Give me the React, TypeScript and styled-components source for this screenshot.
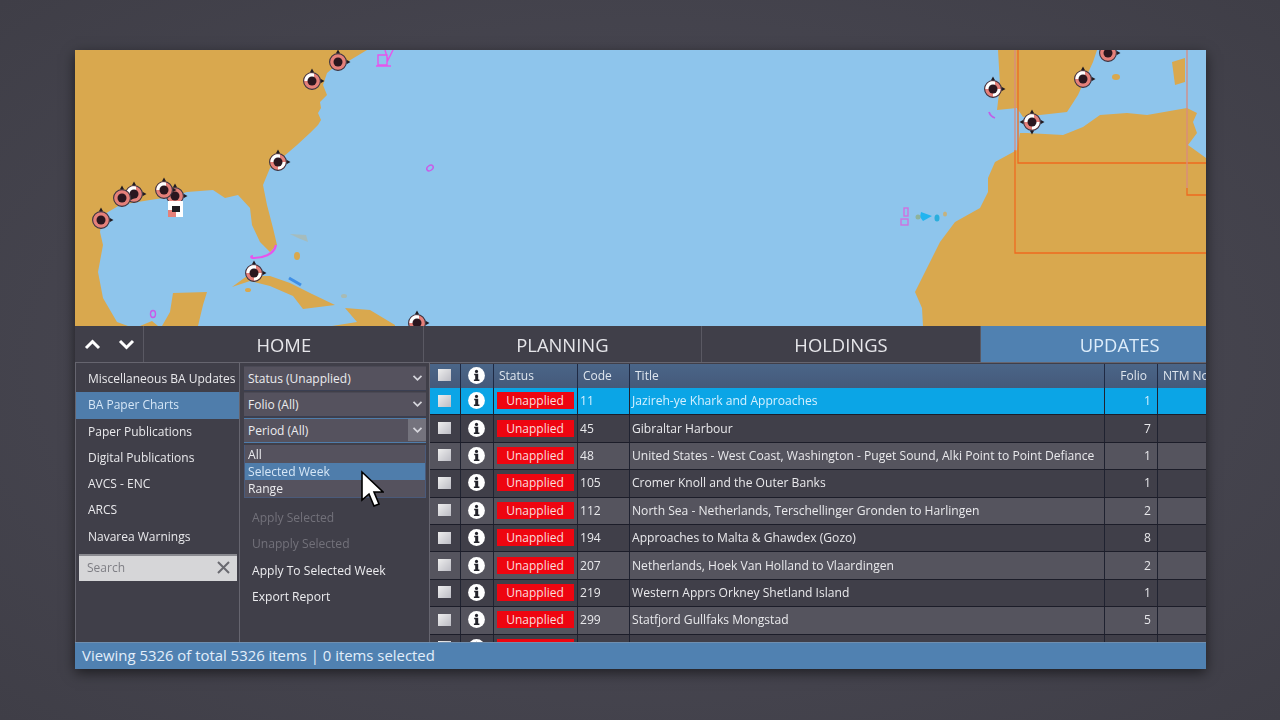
import React from "react";
import styled, { createGlobalStyle } from "styled-components";

const Global = createGlobalStyle`
  html, body { margin: 0; padding: 0; background: #45444e; }
  body { font-family: "Open Sans", "Noto Sans", sans-serif; }
`;

const Page = styled.div`
  position: relative;
  width: 1280px;
  height: 720px;
  padding: 50px 74px 0 75px;
  box-sizing: border-box;
  background: radial-gradient(ellipse at 50% 50%, #4a4953 0%, #45444e 60%, #3f3e47 100%);
  overflow: hidden;
`;

const Window = styled.div`
  width: 1131px;
  height: 619px;
  display: flex;
  flex-direction: column;
  background: #403f49;
  overflow: hidden;
  box-shadow: 0 4px 12px rgba(0, 0, 0, 0.55);
  filter: blur(0.45px);
`;

const MapSvg = styled.svg`
  display: block;
  flex: none;
  width: 1131px;
  height: 276px;
  background: #8ec5ec;
`;

const TabBar = styled.div`
  flex: none;
  height: 36px;
  display: flex;
  background: #403f49;
`;

const ArrowCell = styled.div`
  flex: none;
  width: 69px;
  margin-right: 1px;
  box-sizing: border-box;
  display: flex;
  align-items: center;
  justify-content: center;
  gap: 17px;
  border-right: 1px solid #5a5963;
  color: #fff;
`;

const Tab = styled.div<{ $active?: boolean }>`
  flex: none;
  width: 278.6px;
  box-sizing: border-box;
  display: flex;
  align-items: center;
  justify-content: center;
  font-size: 18.4px;
  padding-top: 1px;
  color: ${(p) => (p.$active ? "#dcecfa" : "#e6e6ea")};
  background: ${(p) => (p.$active ? "#5081b1" : "transparent")};
  border-right: 1px solid #5a5963;
`;

const Body = styled.div`
  flex: 1;
  min-height: 0;
  display: flex;
  border-top: 1px solid #66656f;
  border-left: 1px solid #66656f;
`;

const Sidebar = styled.div`
  flex: none;
  width: 164px;
  box-sizing: border-box;
  border-right: 1px solid #66656f;
  padding-top: 3px;
  display: flex;
  flex-direction: column;
`;

const SideItem = styled.div<{ $selected?: boolean }>`
  height: 26.3px;
  line-height: 26.3px;
  padding-left: 12px;
  font-size: 12px;
  white-space: nowrap;
  color: ${(p) => (p.$selected ? "#d5e6f6" : "#e9e9ec")};
  background: ${(p) => (p.$selected ? "#4f7dab" : "transparent")};
`;

const SearchBox = styled.div`
  margin: 4px 2px 0 3px;
  height: 27px;
  padding: 0 7px 2px 8px;
  display: flex;
  align-items: center;
  justify-content: space-between;
  background: #d6d6d8;
  border-top: 2px solid #8a8a90;
  box-sizing: border-box;
  font-size: 12px;
  color: #7e7e84;
`;

const Filters = styled.div`
  flex: none;
  width: 190px;
  box-sizing: border-box;
  border-right: 1px solid #66656f;
  padding: 3px 3px 0 4px;
  display: flex;
  flex-direction: column;
`;

const Select = styled.div<{ $open?: boolean }>`
  height: 25px;
  margin-bottom: 1px;
  box-sizing: border-box;
  display: flex;
  align-items: center;
  justify-content: space-between;
  padding-left: 4px;
  padding-bottom: 1px;
  font-size: 12px;
  color: #ececef;
  background: #55525e;
  border-bottom: 1px solid ${(p) => (p.$open ? "#4f7dab" : "#3a3f52")};
  border-top: 1px solid ${(p) => (p.$open ? "#4f7dab" : "#4a4955")};
`;

const Chevron = styled.span<{ $open?: boolean }>`
  align-self: stretch;
  width: 18px;
  display: flex;
  align-items: center;
  justify-content: center;
  background: ${(p) => (p.$open ? "#74737d" : "transparent")};
`;

const OptionList = styled.div`
  margin-top: 1px;
  height: 53px;
  box-sizing: border-box;
  padding-top: 1px;
  background: #55525e;
  border: 1px solid #4a5a7a;
  border-top: none;
`;

const Option = styled.div<{ $hover?: boolean }>`
  height: 17px;
  line-height: 17px;
  padding-left: 3px;
  font-size: 12.1px;
  color: ${(p) => (p.$hover ? "#d5e6f6" : "#ececef")};
  background: ${(p) => (p.$hover ? "#4f7dab" : "transparent")};
`;

const Actions = styled.div`
  margin-top: 7px;
  display: flex;
  flex-direction: column;
`;

const ActionItem = styled.div<{ $disabled?: boolean }>`
  height: 26.3px;
  line-height: 26.3px;
  padding-left: 8px;
  font-size: 12.1px;
  color: ${(p) => (p.$disabled ? "#72717a" : "#ececef")};
`;

const GridPane = styled.div`
  flex: 1;
  min-width: 0;
  overflow: hidden;
  padding-top: 1px;
`;

const COLUMNS = "31px 33px 84px 52px 475px 53px 60px";

const HeaderRow = styled.div`
  display: grid;
  grid-template-columns: ${COLUMNS};
  width: 788px;
  height: 24px;
  background: linear-gradient(#4a6588, #45597a);
  font-size: 12px;
  color: #dfe6ee;
`;

const HeadCell = styled.div<{ $align?: "center" | "right" }>`
  display: flex;
  align-items: center;
  justify-content: ${(p) =>
    p.$align === "center" ? "center" : p.$align === "right" ? "flex-end" : "flex-start"};
  padding: 0 ${(p) => (p.$align === "right" ? 10 : p.$align === "center" ? 1 : 0)}px 2px ${(p) => (p.$align ? 0 : 5)}px;
  white-space: nowrap;
  overflow: hidden;
  border-right: 1px solid #1f2a44;
  box-sizing: border-box;
`;

const Row = styled.div<{ $tone: "sel" | "dark" | "light" }>`
  display: grid;
  grid-template-columns: ${COLUMNS};
  width: 788px;
  height: 27.4px;
  box-sizing: border-box;
  border-bottom: 1px solid #1c1d29;
  font-size: 12.1px;
  color: ${(p) => (p.$tone === "sel" ? "#d4f0ff" : "#e9e9ec")};
  background: ${(p) =>
    p.$tone === "sel" ? "#0ba5e6" : p.$tone === "dark" ? "#403f49" : "#55545e"};
`;

const Cell = styled.div<{ $align?: "center" | "right" }>`
  display: flex;
  align-items: center;
  justify-content: ${(p) =>
    p.$align === "center" ? "center" : p.$align === "right" ? "flex-end" : "flex-start"};
  padding: 0 ${(p) => (p.$align === "right" ? 6 : p.$align === "center" ? 1 : 0)}px 1px ${(p) => (p.$align ? 0 : 2)}px;
  white-space: nowrap;
  overflow: hidden;
  border-right: 1px solid #1f2230;
  box-sizing: border-box;
`;

const CheckBox = styled.span`
  display: block;
  width: 13px;
  height: 12px;
  background: linear-gradient(135deg, #eeeeee, #bcbcc4);
  box-sizing: border-box;
`;

const Badge = styled.span`
  display: block;
  width: 77px;
  height: 17px;
  line-height: 17px;
  text-align: center;
  background: #ee0510;
  color: #f9dede;
  font-size: 12px;
`;

const StatusBar = styled.div`
  flex: none;
  height: 27px;
  line-height: 25px;
  padding-left: 7px;
  font-size: 14.9px;
  color: #e2eefa;
  background: #5081b1;
  border-top: 1px solid #6f8fb0;
  box-sizing: border-box;
`;

const Cursor = styled.svg`
  position: absolute;
  left: 360px;
  top: 470px;
  width: 24px;
  height: 40px;
`;

const Info = () => (
  <svg width="17" height="17" viewBox="0 0 17 17">
    <circle cx="8.5" cy="8.5" r="8.4" fill="#fff" />
    <circle cx="8.5" cy="4.4" r="1.6" fill="#23232b" />
    <path d="M6.2 6.8h4v5.7h1.2v1.4H5.9v-1.4h1.3V8.2h-1z" fill="#23232b" />
  </svg>
);

const Check = () => (
  <svg width="11" height="8" viewBox="0 0 11 8" fill="none">
    <path d="M1.5 1.8 5.5 5.8 9.5 1.8" stroke="#d6d6dc" strokeWidth="1.7" />
  </svg>
);

const Arrow = ({ up }: { up?: boolean }) => (
  <svg width="17" height="11" viewBox="0 0 17 11" fill="none">
    <path d={up ? "M2 9 8.5 2.5 15 9" : "M2 2 8.5 8.5 15 2"} stroke="#fff" strokeWidth="3" />
  </svg>
);

const Marker = ({ x, y, kind, four }: { x: number; y: number; kind?: "half" | "two"; four?: boolean }) => (
  <g transform={`translate(${x} ${y})`}>
    <path d="M-2.2-8.5 0-12.5 2.2-8.5ZM8.5-2.2 12.5 0 8.5 2.2Z" fill="#221c22" />
    {four && <path d="M-2.2 8.5 0 12.5 2.2 8.5ZM-8.5-2.2-12.5 0-8.5 2.2Z" fill="#221c22" />}
    <circle r="8.4" fill="#e5807a" stroke="#3a3340" strokeWidth="1.1" />
    {kind && (
      <path
        d={
          kind === "half"
            ? "M2 0V-7.6A7.6 7.6 0 0 0-7.6 0Z"
            : "M2 0V-7.6A7.6 7.6 0 0 0-7.6 0ZM0 0V7.6A7.6 7.6 0 0 0 7.6 0Z"
        }
        fill="#fff"
      />
    )}
    <circle r="4.5" fill="#2a161f" />
  </g>
);

const WorldMap = () => (
  <MapSvg viewBox="75 50 1131 276">
    <g fill="#d9a84e">
      <path d="M75 50H367L347 62 333 68 327 73 323 85 327 95 320 102 321 108 318 113 321 120 318 125 310 133 297 145 283 157 270 168 263 185 267 205 273 228 277 245 270 252 260 242 252 225 250 208 238 195 225 198 213 190 187 192 170 197 150 200 120 205 103 215 100 232 103 245 98 272 103 298 117 322 128 326H75Z" />
      <path d="M173 293 207 292 203 305 198 326H162L170 312Z" />
      <path d="M140 326 152 321 158 326Z" />
      <path d="M232 287 247 276 270 276 290 283 310 293 335 305 303 309 293 296 270 286 250 281Z" />
      <path d="M345 308 370 310 395 325V326H332L357 322Z" />
      <ellipse cx="248" cy="290" rx="3" ry="2" />
      <ellipse cx="297" cy="256" rx="3" ry="4" />
      <ellipse cx="344" cy="296" rx="3" ry="2" opacity=".35" />
      <path d="M290 234 306 235 308 242 298 238Z" opacity=".3" />
      <path d="M998 50H1097L1093 62 1078 95 1067 112 1040 115 1023 117 1017 108 997 110 1000 85Z" />
      <path d="M1020 133 1027 133 1063 135 1083 127 1100 115 1127 113 1147 115 1187 108 1197 113 1193 122 1197 133 1188 145 1206 158V326H923L922 308 915 292 927 268 940 242 955 222 980 208 988 192 988 178 995 162 1017 150Z" />
      <ellipse cx="1116" cy="77" rx="4" ry="3" />
      <path d="M1172 62 1185 58V82L1175 85Z" />
    </g>
    <g fill="none" strokeWidth="1.3">
      <path d="M1015 50V150" stroke="#d98a80" />
      <path d="M1015 150V253H1206" stroke="#ee6a1f" />
      <path d="M1018 50V163H1206" stroke="#ee6a1f" />
      <path d="M1187 50V188" stroke="#d98a80" />
      <path d="M1187 188V195H1206" stroke="#ee6a1f" />
    </g>
    <g fill="none" stroke="#e655ec" strokeWidth="1.4">
      <path d="M376 66H391M378 55H387V65H378ZM385 50 388 60 393 50" />
      <ellipse cx="430" cy="168" rx="3.5" ry="2.5" transform="rotate(-35 430 168)" stroke="#c95ce8" />
      <ellipse cx="153" cy="314" rx="2.5" ry="3.5" stroke="#c95ce8" />
      <path d="M276 245C274 255 262 258 254 258 250 258 251 256 253 256" strokeWidth="2.2" />
      <path d="M989 112C990 115 992 117 995 118" stroke="#c060e8" strokeWidth="1.8" />
      <rect x="904" y="208" width="4" height="8" stroke="#d070e0" />
      <rect x="901" y="219" width="7" height="6" stroke="#d070e0" />
    </g>
    <path d="M289 278 301 285" stroke="#3f8fe6" strokeWidth="3" />
    <path d="M921 212 932 216 923 221 920 217Z" fill="#21b4f0" />
    <ellipse cx="937" cy="218" rx="2.5" ry="3.5" fill="#2aaedd" />
    <ellipse cx="945" cy="214" rx="2" ry="2.5" fill="#c5b27f" />
    <ellipse cx="918" cy="217" rx="2.5" ry="2.5" fill="#8eb39b" />
    <Marker x={338} y={62} />
    <Marker x={312} y={81} kind="half" />
    <Marker x={278} y={162} kind="two" />
    <Marker x={134} y={194} kind="half" />
    <Marker x={122} y={198} />
    <Marker x={175} y={196} />
    <Marker x={164} y={190} kind="half" />
    <Marker x={101} y={220} />
    <Marker x={254} y={273} kind="two" />
    <Marker x={417} y={323} kind="half" />
    <Marker x={993} y={89} kind="two" />
    <Marker x={1083} y={79} kind="half" />
    <Marker x={1032} y={122} kind="two" four />
    <Marker x={1108} y={53} />
    <rect x="168" y="201" width="15" height="16" fill="#fff" />
    <rect x="168" y="210" width="8" height="7" fill="#e5807a" />
    <rect x="172" y="206" width="8" height="6" fill="#1d1d22" />
  </MapSvg>
);

const rows: [string, string, string][] = [
  ["11", "Jazireh-ye Khark and Approaches", "1"],
  ["45", "Gibraltar Harbour", "7"],
  ["48", "United States - West Coast, Washington - Puget Sound, Alki Point to Point Defiance", "1"],
  ["105", "Cromer Knoll and the Outer Banks", "1"],
  ["112", "North Sea - Netherlands, Terschellinger Gronden to Harlingen", "2"],
  ["194", "Approaches to Malta & Ghawdex (Gozo)", "8"],
  ["207", "Netherlands, Hoek Van Holland to Vlaardingen", "2"],
  ["219", "Western Apprs Orkney Shetland Island", "1"],
  ["299", "Statfjord Gullfaks Mongstad", "5"],
  ["", "", ""],
];

const side = [
  "Miscellaneous BA Updates",
  "BA Paper Charts",
  "Paper Publications",
  "Digital Publications",
  "AVCS - ENC",
  "ARCS",
  "Navarea Warnings",
];

export default function App() {
  return (
    <>
      <Global />
      <Page>
        <Window>
          <WorldMap />
          <TabBar>
            <ArrowCell>
              <Arrow up />
              <Arrow />
            </ArrowCell>
            <Tab>HOME</Tab>
            <Tab>PLANNING</Tab>
            <Tab>HOLDINGS</Tab>
            <Tab $active>UPDATES</Tab>
          </TabBar>
          <Body>
            <Sidebar>
              {side.map((s, i) => (
                <SideItem key={s} $selected={i === 1}>{s}</SideItem>
              ))}
              <SearchBox>
                Search
                <svg width="13" height="13" viewBox="0 0 13 13">
                  <path d="M1 1 12 12M12 1 1 12" stroke="#6a6a70" strokeWidth="2" />
                </svg>
              </SearchBox>
            </Sidebar>
            <Filters>
              <Select>Status (Unapplied)<Chevron><Check /></Chevron></Select>
              <Select>Folio (All)<Chevron><Check /></Chevron></Select>
              <Select $open>Period (All)<Chevron $open><Check /></Chevron></Select>
              <OptionList>
                <Option>All</Option>
                <Option $hover>Selected Week</Option>
                <Option>Range</Option>
              </OptionList>
              <Actions>
                <ActionItem $disabled>Apply Selected</ActionItem>
                <ActionItem $disabled>Unapply Selected</ActionItem>
                <ActionItem>Apply To Selected Week</ActionItem>
                <ActionItem>Export Report</ActionItem>
              </Actions>
            </Filters>
            <GridPane>
              <HeaderRow>
                <HeadCell $align="center"><CheckBox /></HeadCell>
                <HeadCell $align="center"><Info /></HeadCell>
                <HeadCell>Status</HeadCell>
                <HeadCell>Code</HeadCell>
                <HeadCell>Title</HeadCell>
                <HeadCell $align="right">Folio</HeadCell>
                <HeadCell>NTM Notices</HeadCell>
              </HeaderRow>
              {rows.map((r, i) => (
                <Row key={i} $tone={i === 0 ? "sel" : i % 2 ? "dark" : "light"}>
                  <Cell $align="center"><CheckBox /></Cell>
                  <Cell $align="center"><Info /></Cell>
                  <Cell $align="center"><Badge>{r[0] ? "Unapplied" : ""}</Badge></Cell>
                  <Cell>{r[0]}</Cell>
                  <Cell>{r[1]}</Cell>
                  <Cell $align="right">{r[2]}</Cell>
                  <Cell />
                </Row>
              ))}
            </GridPane>
          </Body>
          <StatusBar>Viewing 5326 of total 5326 items | 0 items selected</StatusBar>
        </Window>
        <Cursor viewBox="0 0 24 40">
          <path d="M2 2V30L9 24 14 36 19 34 14 22 23 22Z" fill="#fff" stroke="#000" strokeWidth="1.6" />
        </Cursor>
      </Page>
    </>
  );
}
